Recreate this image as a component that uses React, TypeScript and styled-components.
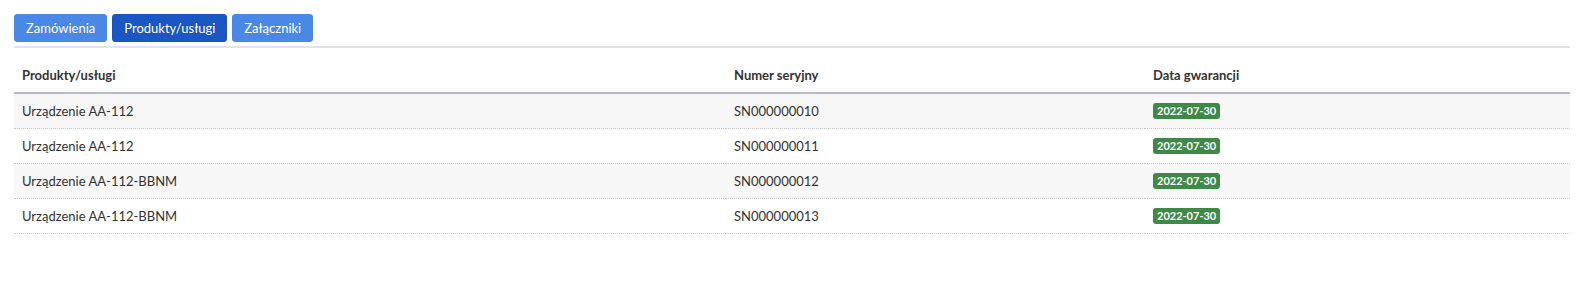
import React, { useState } from 'react';
import styled, { createGlobalStyle } from 'styled-components';

interface ProductRow {
  name: string;
  serial: string;
  warranty: string;
}

const rows: ProductRow[] = [
  { name: 'Urządzenie AA-112', serial: 'SN000000010', warranty: '2022-07-30' },
  { name: 'Urządzenie AA-112', serial: 'SN000000011', warranty: '2022-07-30' },
  { name: 'Urządzenie AA-112-BBNM', serial: 'SN000000012', warranty: '2022-07-30' },
  { name: 'Urządzenie AA-112-BBNM', serial: 'SN000000013', warranty: '2022-07-30' },
];

const tabs = ['Zamówienia', 'Produkty/usługi', 'Załączniki'];

const GlobalStyle = createGlobalStyle`
  body {
    margin: 0;
    background: #fff;
    font-family: Lato, 'Open Sans', sans-serif;
    color: #333;
  }
`;

const App: React.FC = () => {
  const [active, setActive] = useState('Produkty/usługi');

  return (
    <Page>
      <GlobalStyle />
      <TabBar>
        {tabs.map((t) => (
          <TabButton key={t} $active={t === active} onClick={() => setActive(t)}>
            {t}
          </TabButton>
        ))}
      </TabBar>
      <Table>
        <colgroup>
          <col style={{ width: 712 }} />
          <col style={{ width: 419 }} />
          <col />
        </colgroup>
        <thead>
          <tr>
            <Th>Produkty/usługi</Th>
            <Th>Numer seryjny</Th>
            <Th>Data gwarancji</Th>
          </tr>
        </thead>
        <tbody>
          {rows.map((r, i) => (
            <Row key={r.serial} $striped={i % 2 === 0}>
              <Td>{r.name}</Td>
              <Td>{r.serial}</Td>
              <Td>
                <Badge>{r.warranty}</Badge>
              </Td>
            </Row>
          ))}
        </tbody>
      </Table>
    </Page>
  );
};

const Page = styled.div`
  padding: 14px 15px 0 14px;
`;

const TabBar = styled.div`
  display: flex;
  gap: 5px;
  padding-bottom: 4px;
  border-bottom: 2px solid #e2e3e5;
`;

const TabButton = styled.button<{ $active: boolean }>`
  height: 28px;
  padding: 0 11px;
  border: 1px solid ${(p) => (p.$active ? '#1a53bd' : '#4a87e6')};
  border-radius: 3px;
  background: ${(p) => (p.$active ? '#1a56c4' : '#4a88e8')};
  color: #fff;
  font-family: Lato, 'Open Sans', sans-serif;
  font-size: 13px;
  cursor: pointer;
`;

const Table = styled.table`
  width: 100%;
  table-layout: fixed;
  border-collapse: collapse;
  font-size: 13px;
  line-height: 16px;
`;

const Th = styled.th`
  text-align: left;
  font-weight: bold;
  color: #333;
  padding: 19px 8px 9px;
  border-bottom: 2px solid #b9bcc3;
`;

const Row = styled.tr<{ $striped: boolean }>`
  background: ${(p) => (p.$striped ? '#f7f7f7' : '#fff')};
  border-bottom: 1px dotted #c9c9c9;
`;

const Td = styled.td`
  padding: 9px 8px;
  color: #333;
  vertical-align: middle;
`;

const Badge = styled.span`
  display: inline-block;
  vertical-align: top;
  background: #3d8a47;
  color: #fff;
  font-size: 11px;
  font-weight: bold;
  line-height: 16px;
  padding: 0 4px;
  border-radius: 3px;
`;

export default App;
